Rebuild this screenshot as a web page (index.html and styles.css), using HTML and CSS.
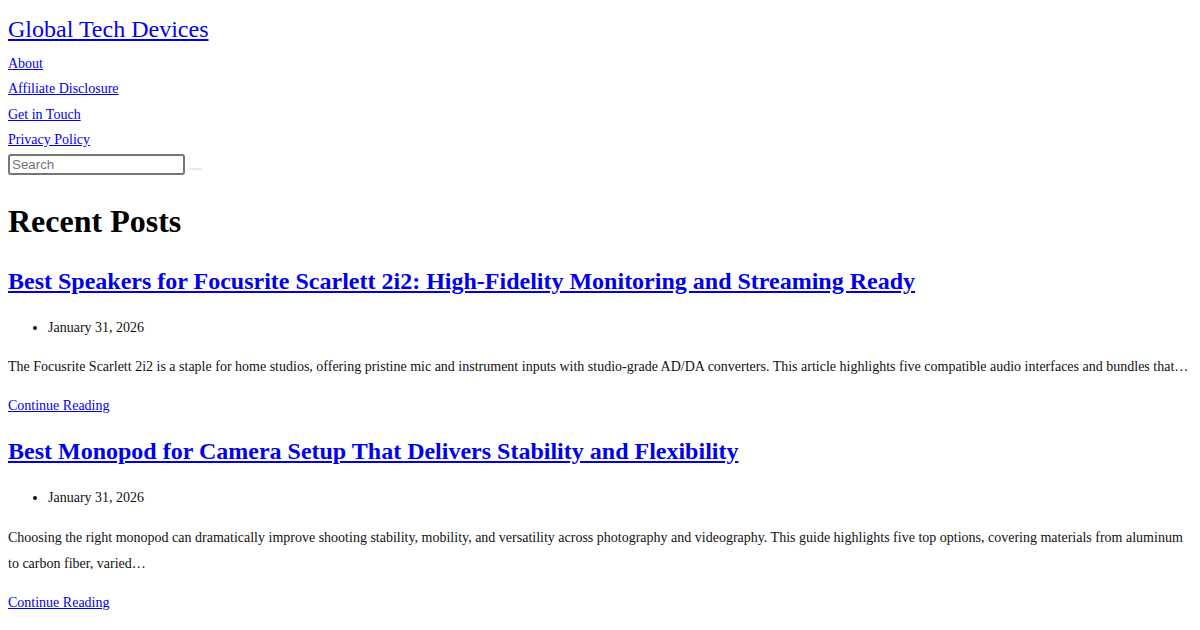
FILE: index.html
```html
<!DOCTYPE html>
<html lang="en">
<head>
<meta charset="utf-8">
<title>Global Tech Devices</title>
<link rel="stylesheet" href="styles.css">
</head>
<body>
<header class="site-header">
  <a class="site-title" href="#">Global Tech Devices</a>
  <ul class="nav">
    <li><a href="#">About</a></li>
    <li><a href="#">Affiliate Disclosure</a></li>
    <li><a href="#">Get in Touch</a></li>
    <li><a href="#">Privacy Policy</a></li>
  </ul>
  <form class="search">
    <input class="search-input" type="text" placeholder="Search">
    <button class="search-btn" type="button"></button>
  </form>
</header>
<main>
  <h2 class="section-title">Recent Posts</h2>
  <article class="post">
    <h3 class="post-title"><a href="#">Best Speakers for Focusrite Scarlett 2i2: High-Fidelity Monitoring and Streaming Ready</a></h3>
    <ul class="post-meta"><li>January 31, 2026</li></ul>
    <p class="excerpt">The Focusrite Scarlett 2i2 is a staple for home studios, offering pristine mic and instrument inputs with studio-grade AD/DA converters. This article highlights five compatible audio interfaces and bundles that…</p>
    <a class="more" href="#">Continue Reading</a>
  </article>
  <article class="post">
    <h3 class="post-title"><a href="#">Best Monopod for Camera Setup That Delivers Stability and Flexibility</a></h3>
    <ul class="post-meta"><li>January 31, 2026</li></ul>
    <p class="excerpt">Choosing the right monopod can dramatically improve shooting stability, mobility, and versatility across photography and videography. This guide highlights five top options, covering materials from aluminum to carbon fiber, varied…</p>
    <a class="more" href="#">Continue Reading</a>
  </article>
</main>
</body>
</html>
```
FILE: styles.css
```css
html, body {
  margin: 0;
  padding: 0;
  background: #fff;
}
body {
  padding: 0 8px;
  font-family: "Liberation Serif", "Times New Roman", serif;
  font-size: 14px;
  line-height: 25.2px;
  color: #111;
}
a {
  color: #0000ee;
}
.site-header {
  padding-top: 11px;
}
.site-title {
  display: block;
  width: max-content;
  font-size: 24px;
  line-height: 36px;
}
.nav {
  list-style: none;
  margin: 4.2px 0 0;
  padding: 0;
}
.nav li {
  line-height: 25.2px;
}
.search {
  display: flex;
  align-items: flex-start;
  gap: 5px;
  margin: 2.2px 0 0;
}
.search-input {
  box-sizing: border-box;
  width: 177px;
  height: 21px;
  margin: 0;
  padding: 1px 2px;
  border: 2px solid #767676;
  border-radius: 3px;
  font-family: "Liberation Sans", Arial, sans-serif;
  font-size: 13.33px;
  color: #000;
  background: #fff;
}
.search-input::placeholder {
  color: #757575;
}
.search-btn {
  width: 12px;
  height: 2px;
  margin-top: 14px;
  padding: 0;
  border: 0;
  background: #e9e9e9;
}
.section-title {
  margin: 26px 0 25px;
  font-size: 32px;
  line-height: 40px;
  font-weight: bold;
  color: #000;
}
.post-title {
  margin: 0 0 18.4px;
  font-size: 24px;
  line-height: 30px;
  font-weight: bold;
}
.post + .post .post-title {
  margin-bottom: 19.4px;
}
.post-meta {
  margin: 0 0 14px;
  padding-left: 40px;
}
.post + .post .post-meta {
  margin-bottom: 15px;
}
.excerpt {
  margin: 0 0 14px;
}
.more {
  display: block;
  width: max-content;
  margin-bottom: 17.6px;
}
```
